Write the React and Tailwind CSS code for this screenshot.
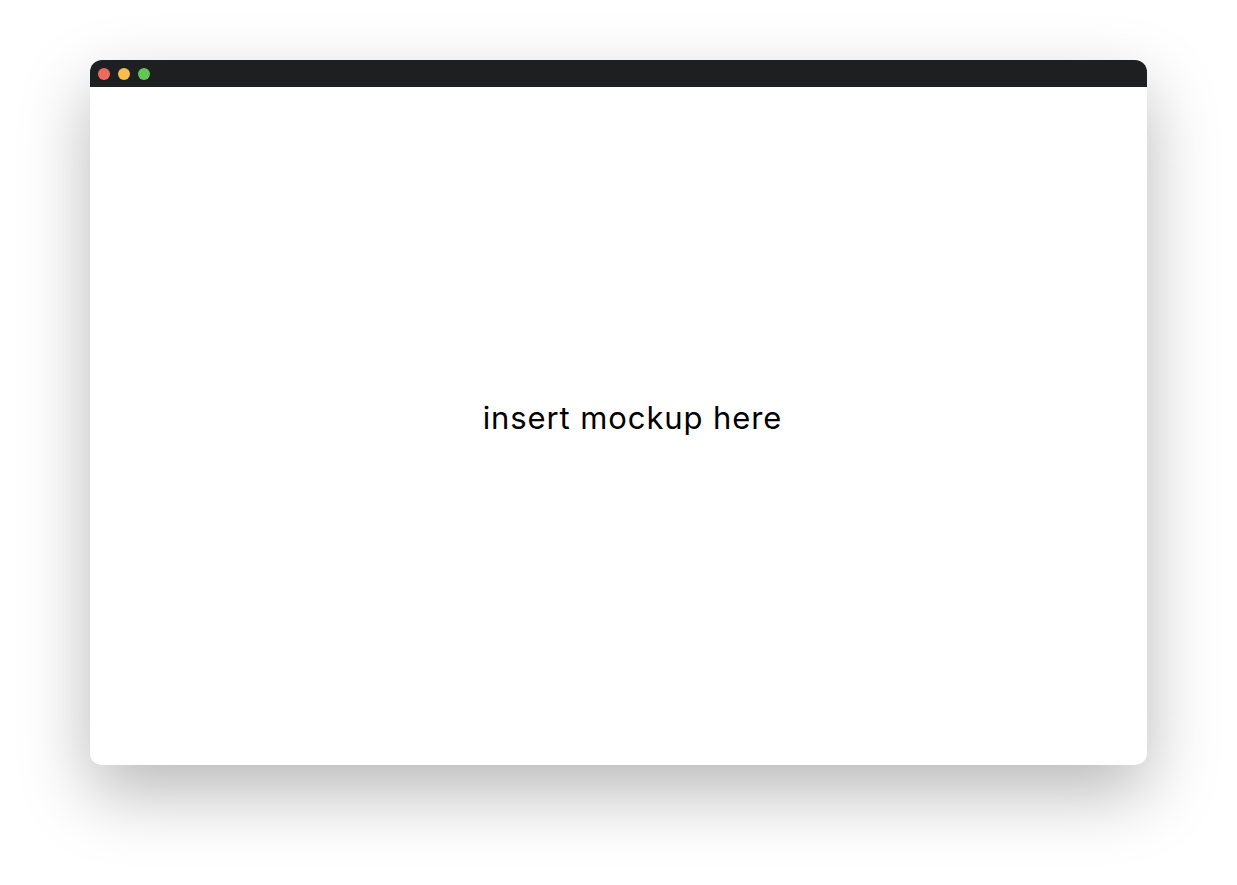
import React from "react";

function TrafficLights() {
  return (
    <div className="flex items-center gap-[8px]">
      <span className="block w-[12px] h-[12px] rounded-full bg-[#ee6a5f]" />
      <span className="block w-[12px] h-[12px] rounded-full bg-[#f5be4f]" />
      <span className="block w-[12px] h-[12px] rounded-full bg-[#62c554]" />
    </div>
  )
}

function App() {
  return (
    <div className="w-[1237px] h-[885px] bg-white pt-[60px] pl-[90px]">
      <div className="w-[1057px] h-[705px] rounded-[12px] bg-white flex flex-col overflow-hidden shadow-[0_28px_70px_rgba(0,0,0,0.28)]">
        <div className="h-[27px] bg-[#1e1f21] flex items-center pl-[8px]">
          <TrafficLights />
        </div>
        <div className="flex-1 flex items-center justify-center pl-[28px] pb-[16px]">
          <span className="text-[31px] text-black font-['Inter',sans-serif] tracking-[0.9px]">insert mockup here</span>
        </div>
      </div>
    </div>
  )
}

export default App
